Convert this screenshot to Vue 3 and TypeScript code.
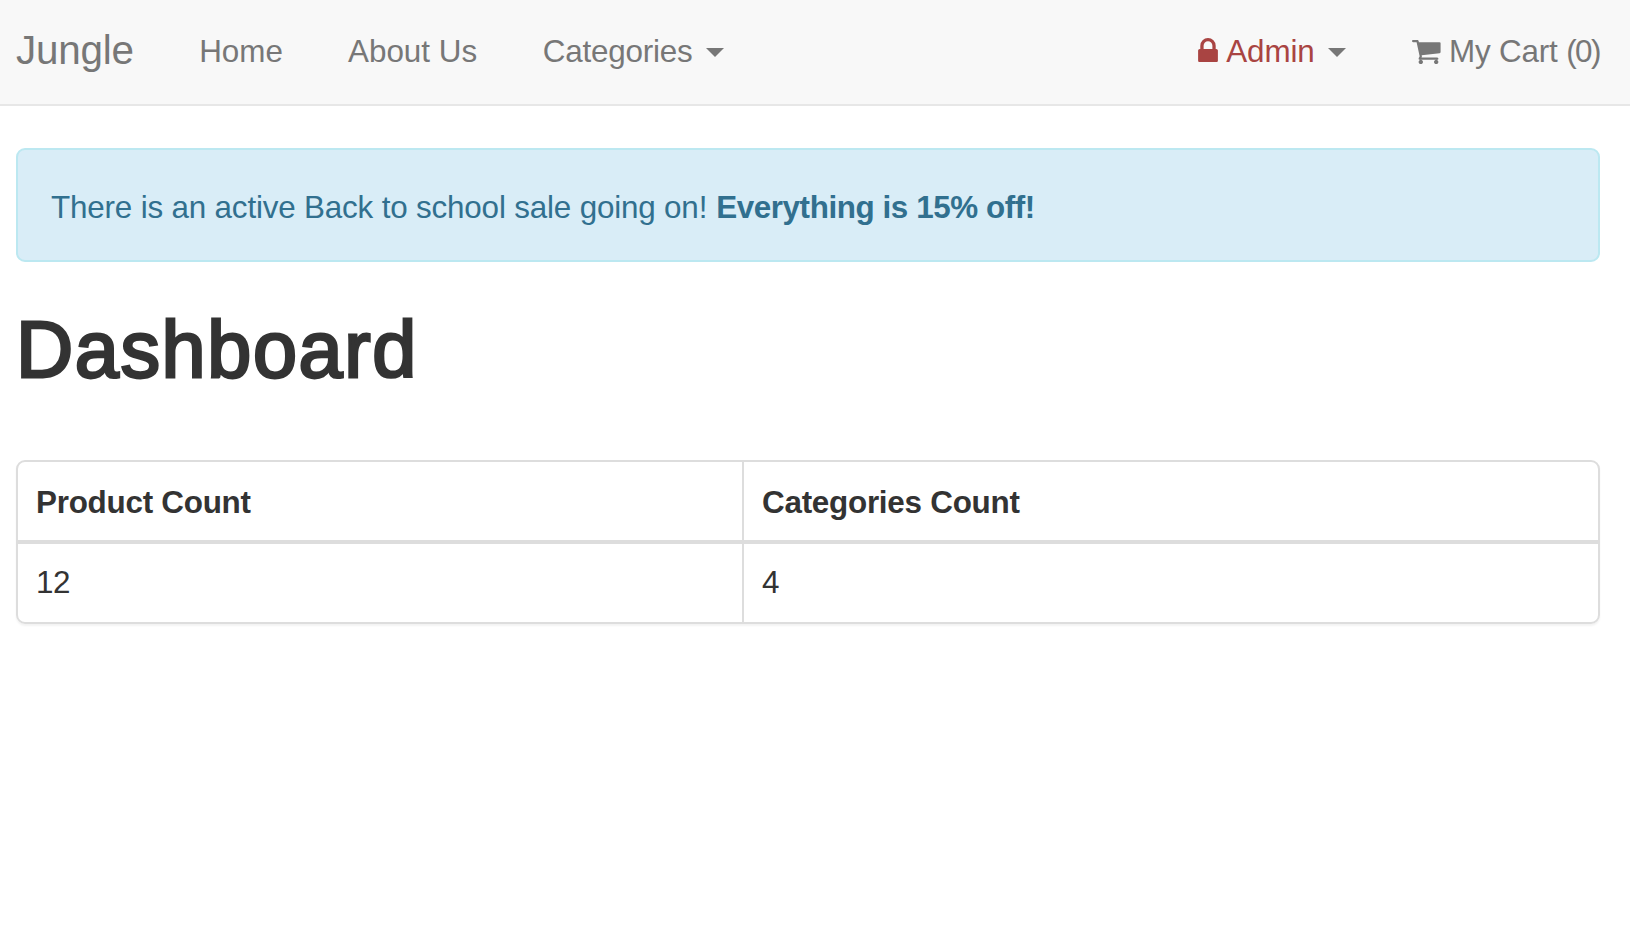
<script setup lang="ts">
interface Stat {
  label: string
  value: number
}

const cartCount = 0
const stats: Stat[] = [
  { label: 'Product Count', value: 12 },
  { label: 'Categories Count', value: 4 },
]
</script>

<template>
  <div class="page">
    <nav class="navbar">
      <a class="brand">Jungle</a>
      <a class="link home">Home</a>
      <a class="link about">About Us</a>
      <a class="link categories">Categories</a>
      <span class="caret"></span>
      <div class="right">
        <a class="link admin">
          <svg class="lock" viewBox="0 0 1152 1408" aria-hidden="true">
            <path d="M320 640h512v-192q0-106-75-181t-181-75-181 75-75 181v192zM1152 736v576q0 40-28 68t-68 28h-960q-40 0-68-28t-28-68v-576q0-40 28-68t68-28h32v-192q0-184 132-316t316-132 316 132 132 316v192h32q40 0 68 28t28 68z" />
          </svg>
          <span>Admin</span>
        </a>
        <span class="caret"></span>
        <a class="link cart">
          <svg class="cart-icon" viewBox="64 256 1664 1408" aria-hidden="true">
            <path d="M704 1536q0 52-38 90t-90 38-90-38-38-90 38-90 90-38 90 38 38 90zm896 0q0 52-38 90t-90 38-90-38-38-90 38-90 90-38 90 38 38 90zm128-1088v512q0 24-16.500 42.500t-40.500 21.500l-1044 122q13 60 13 70 0 16-24 64h920q26 0 45 19t19 45-19 45-45 19h-1024q-26 0-45-19t-19-45q0-11 8-31.500t16-36 21.500-40 15.500-29.500l-177-823h-204q-26 0-45-19t-19-45 19-45 45-19h256q16 0 28.500 6.500t19.500 15.500 13 24.500 8 26 5.500 29.500 4.500 26h1201q26 0 45 19t19 45z" />
          </svg>
          <span class="cart-text">My Cart <span class="count">({{ cartCount }})</span></span>
        </a>
      </div>
    </nav>

    <main class="content">
      <div class="alert">
        <span>There is an active Back to school sale going on!</span>
        <strong>Everything is 15% off!</strong>
      </div>
      <h1>Dashboard</h1>
      <div class="panel">
        <div v-for="stat in stats" :key="stat.label" class="column">
          <div class="head">{{ stat.label }}</div>
          <div class="cell">{{ stat.value }}</div>
        </div>
      </div>
    </main>
  </div>
</template>

<style>
body {
  margin: 0;
  background: #fff;
}
</style>

<style scoped>
.page {
  min-height: 940px;
  font: 31.4px/44px "Liberation Sans", Arial, sans-serif;
  color: #333;
}
.navbar {
  box-sizing: border-box;
  height: 106px;
  padding: 30px 30px 0 16px;
  display: flex;
  align-items: flex-start;
  background: #f8f8f8;
  border-bottom: 2px solid #e7e7e7;
  color: #777;
  white-space: nowrap;
}
.brand {
  width: 183.200px;
  flex: none;
  font-size: 40.400px;
  line-height: 40px;
  letter-spacing: -0.200px;
}
.link {
  flex: none;
}
.home {
  width: 148.800px;
}
.about {
  width: 194.700px;
}
.categories {
  width: 163.300px;
  letter-spacing: -0.200px;
}
.caret {
  margin-top: 18px;
  border-top: 9px solid #777;
  border-left: 9px solid transparent;
  border-right: 9px solid transparent;
}
.right {
  margin-left: auto;
  display: flex;
  align-items: flex-start;
}
.admin {
  width: 130.300px;
  display: flex;
  color: #a94442;
  letter-spacing: -0.150px;
}
.lock {
  width: 20px;
  height: 24.200px;
  margin: 8px 8.500px 0 0;
  fill: currentColor;
}
.cart {
  display: flex;
  margin-left: 66.300px;
}
.cart-icon {
  width: 28.600px;
  height: 24.200px;
  margin: 10px 8px 0 0;
  fill: currentColor;
}
.cart-text {
  letter-spacing: -0.180px;
}
.count {
  letter-spacing: -1.500px;
}
.content {
  padding: 42px 30px 0 16px;
}
.alert {
  box-sizing: border-box;
  height: 114px;
  padding: 36px 33px 0;
  display: flex;
  gap: 9px;
  background: #d9edf7;
  border: 2px solid #bce8f1;
  border-radius: 9px;
  color: #31708f;
  white-space: nowrap;
  letter-spacing: -0.180px;
}
.alert strong {
  letter-spacing: -0.420px;
}
h1 {
  margin: 44px 0 66px;
  height: 88px;
  font-size: 79.200px;
  line-height: 88px;
  font-weight: 400;
  letter-spacing: 1.600px;
  -webkit-text-stroke: 2.800px #333;
}
.panel {
  display: grid;
  grid-template-columns: 724px 1fr;
  border: 2px solid #ddd;
  border-radius: 9px;
  box-shadow: 0 2px 2px rgba(0, 0, 0, 0.05);
}
.column + .column {
  border-left: 2px solid #ddd;
}
.head {
  padding: 19px 18px 15px;
  border-bottom: 4px solid #ddd;
  font-weight: 700;
  letter-spacing: -0.250px;
}
.cell {
  padding: 17px 18px;
  letter-spacing: -0.400px;
}
</style>
